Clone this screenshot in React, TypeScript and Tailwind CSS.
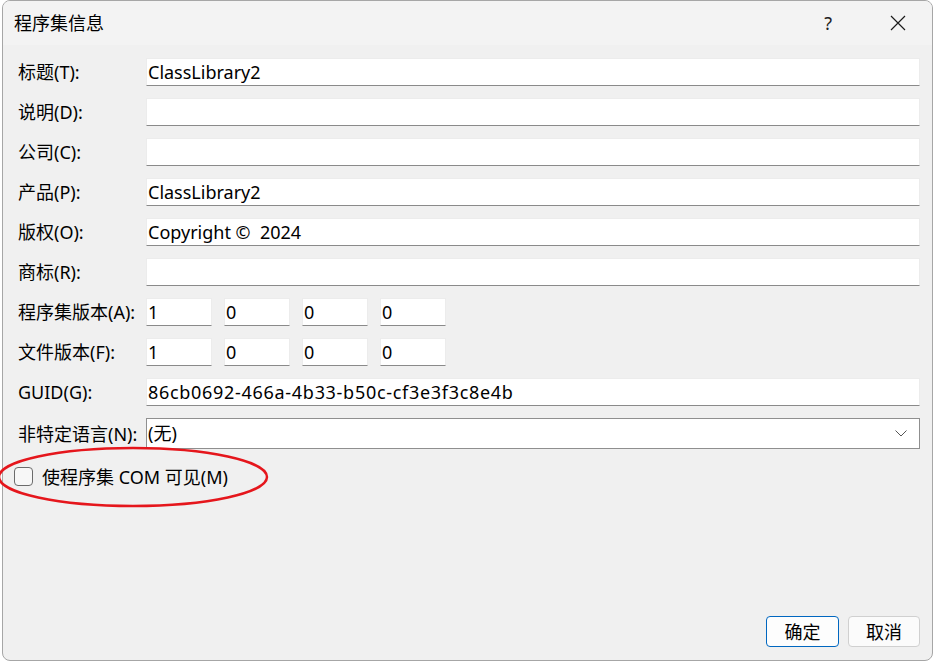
import React from 'react';

const font = { fontFamily: '"Noto Sans", "Noto Sans CJK SC", sans-serif' };

interface FieldRowProps {
  label: string;
  value?: string;
  wide?: boolean;
}

const TextBox: React.FC<{ value?: string; className?: string }> = ({ value, className }) => (
  <div
    className={`h-[28px] bg-white border border-[#ececec] border-b-[#8a8a8a] flex items-center pl-[1px] text-[18px] text-black leading-none whitespace-pre ${className ?? ''}`}
  >
    {value}
  </div>
);

const FieldRow: React.FC<FieldRowProps> = ({ label, value, wide }) => (
  <div className="flex items-center h-[28px]">
    <div className="w-[128px] text-[18px] text-black leading-none whitespace-nowrap">{label}</div>
    <TextBox value={value} className={wide ? 'flex-1 tracking-[0.7px]' : 'flex-1'} />
  </div>
);

const VersionRow: React.FC<{ label: string; parts: string[] }> = ({ label, parts }) => (
  <div className="flex items-center h-[28px]">
    <div className="w-[128px] text-[18px] text-black leading-none whitespace-nowrap">{label}</div>
    <div className="flex gap-[12px]">
      {parts.map((p, i) => (
        <TextBox key={i} value={p} className="w-[66px]" />
      ))}
    </div>
  </div>
);

export default function App() {
  return (
    <div className="relative w-[934px] h-[662px] bg-white overflow-hidden" style={font}>
      <div className="ml-[2px] w-[931px] h-[661px] rounded-[8px] border border-[#a6a6a6] overflow-hidden flex flex-col bg-[#f0f0f0]">
        {/* title bar */}
        <div className="h-[44px] bg-[#f3f3f3] flex items-center pl-[11px] pr-[26px]">
          <span className="text-[18px] text-black">程序集信息</span>
          <span className="ml-auto text-[18px] text-[#222] mr-[58px]">?</span>
          <svg width="16" height="16" viewBox="0 0 16 16">
            <path d="M1 1 L15 15 M15 1 L1 15" stroke="#1a1a1a" strokeWidth="1.2" fill="none" />
          </svg>
        </div>

        {/* body */}
        <div className="flex-1 flex flex-col pt-[13px] pl-[15px] pr-[12px]">
          <div className="flex flex-col gap-[12px]">
            <FieldRow label="标题(T):" value="ClassLibrary2" />
            <FieldRow label="说明(D):" />
            <FieldRow label="公司(C):" />
            <FieldRow label="产品(P):" value="ClassLibrary2" />
            <FieldRow label="版权(O):" value="Copyright ©  2024" />
            <FieldRow label="商标(R):" />
            <VersionRow label="程序集版本(A):" parts={['1', '0', '0', '0']} />
            <VersionRow label="文件版本(F):" parts={['1', '0', '0', '0']} />
            <FieldRow label="GUID(G):" value="86cb0692-466a-4b33-b50c-cf3e3f3c8e4b" wide />
            <div className="flex items-center h-[31px]">
              <div className="w-[128px] text-[18px] text-black leading-none whitespace-nowrap">非特定语言(N):</div>
              <div className="flex-1 h-[31px] bg-white border border-[#8f8f8f] flex items-center pl-[1px] pr-[12px] text-[18px] text-black">
                <span>(无)</span>
                <svg width="12" height="7" viewBox="0 0 12 7" className="ml-auto">
                  <path d="M0.5 0.5 L6 6 L11.5 0.5" stroke="#555" strokeWidth="1" fill="none" />
                </svg>
              </div>
            </div>
          </div>

          <div className="flex items-center mt-[18px] -ml-[4px] gap-[9px]">
            <div className="w-[19px] h-[19px] rounded-[4px] border border-[#6b6b6b] bg-[#f7f7f7]" />
            <span className="text-[18px] text-black leading-none">使程序集 COM 可见(M)</span>
          </div>

          <div className="flex-1" />

          <div className="flex justify-end gap-[9px] pb-[13px]">
            <button className="w-[73px] h-[31px] rounded-[4px] border border-[#0067c0] bg-[#fdfdfd] text-[18px] text-black leading-none">
              确定
            </button>
            <button className="w-[72px] h-[31px] rounded-[4px] border border-[#d0d0d0] bg-[#fbfbfb] text-[18px] text-black leading-none">
              取消
            </button>
          </div>
        </div>
      </div>

      {/* red annotation ellipse */}
      <svg className="absolute left-0 top-0 pointer-events-none" width="934" height="662">
        <ellipse cx="133" cy="477" rx="134" ry="29" stroke="#e5161c" strokeWidth="2.5" fill="none" />
      </svg>
    </div>
  );
}
